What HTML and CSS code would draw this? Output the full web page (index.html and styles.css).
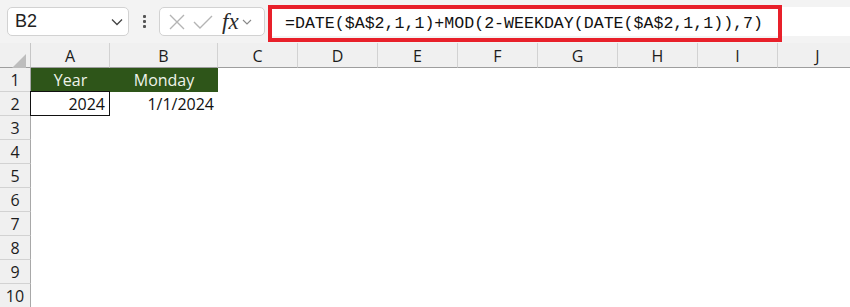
FILE: index.html
```html
<!DOCTYPE html>
<html lang="en">
<head>
    <meta charset="UTF-8">
    <title>Next Monday Formula</title>
    <link rel="stylesheet" href="styles.css">
</head>
<body>
    <div class="toolbar">
        <div class="name-box">
            <span>B2</span>
            <svg class="chevron" width="12" height="8" viewBox="0 0 12 8"><path d="M1 1.5 L6 6.5 L11 1.5" fill="none" stroke="#444" stroke-width="1.3"/></svg>
        </div>
        <div class="grip">
            <i></i><i></i><i></i>
        </div>
        <div class="fx-box">
            <svg width="18" height="18" viewBox="0 0 18 18"><path d="M2 2 L16 16 M16 2 L2 16" stroke="#b4b4b4" stroke-width="1.4"/></svg>
            <svg width="20" height="18" viewBox="0 0 20 18"><path d="M1 9 L7 15 L19 3" fill="none" stroke="#b4b4b4" stroke-width="1.4"/></svg>
            <span class="fx">fx</span>
            <svg width="10" height="6" viewBox="0 0 10 6"><path d="M1 1 L5 5 L9 1" fill="none" stroke="#888" stroke-width="1.1"/></svg>
        </div>
        <div class="formula-bar">
            <div class="formula">=DATE($A$2,1,1)+MOD(2-WEEKDAY(DATE($A$2,1,1)),7)</div>
        </div>
    </div>

    <div class="sheet">
        <div class="corner"><span class="tri"></span></div>
        <div class="col-head">A</div>
        <div class="col-head">B</div>
        <div class="col-head">C</div>
        <div class="col-head">D</div>
        <div class="col-head">E</div>
        <div class="col-head">F</div>
        <div class="col-head">G</div>
        <div class="col-head">H</div>
        <div class="col-head">I</div>
        <div class="col-head">J</div>

        <div class="row-head">1</div>
        <div class="cell title">Year</div>
        <div class="cell title">Monday</div>
        <div class="cell rest"></div>

        <div class="row-head">2</div>
        <div class="cell num boxed">2024</div>
        <div class="cell num">1/1/2024</div>
        <div class="cell rest"></div>

        <div class="row-head">3</div><div class="cell empty-row"></div>
        <div class="row-head">4</div><div class="cell empty-row"></div>
        <div class="row-head">5</div><div class="cell empty-row"></div>
        <div class="row-head">6</div><div class="cell empty-row"></div>
        <div class="row-head">7</div><div class="cell empty-row"></div>
        <div class="row-head">8</div><div class="cell empty-row"></div>
        <div class="row-head">9</div><div class="cell empty-row"></div>
        <div class="row-head">10</div><div class="cell empty-row"></div>
    </div>
</body>
</html>
```

FILE: styles.css
```css
body {
    margin: 0;
    width: 850px;
    height: 307px;
    overflow: hidden;
    background: #fff;
    font-family: 'Open Sans', 'Liberation Sans', sans-serif;
    color: #1f1f1f;
}

.toolbar {
    display: flex;
    align-items: center;
    height: 43px;
    background: #f3f3f3;
    padding-left: 7px;
    box-sizing: border-box;
}

.name-box {
    width: 122px;
    height: 29px;
    box-sizing: border-box;
    background: #fff;
    border: 1px solid #d2d2d2;
    border-radius: 5px;
    display: flex;
    align-items: center;
    justify-content: space-between;
    padding: 0 5px 0 7px;
    font-family: 'Liberation Sans', sans-serif;
    font-size: 18px;
    color: #222;
}

.name-box .chevron {
    margin-top: 1px;
}

.grip {
    width: 30px;
    display: flex;
    flex-direction: column;
    align-items: center;
    gap: 2px;
}

.grip i {
    width: 3px;
    height: 3px;
    background: #555;
    border-radius: 1px;
}

.fx-box {
    width: 106px;
    height: 29px;
    box-sizing: border-box;
    background: #fff;
    border: 1px solid #d2d2d2;
    border-radius: 5px;
    display: flex;
    align-items: center;
    gap: 7px;
    padding-left: 8px;
}

.fx {
    font-family: 'Liberation Serif', serif;
    font-style: italic;
    font-size: 23px;
    color: #2a2a2a;
    margin-left: 2px;
    margin-right: -4px;
    line-height: 1;
}

.formula-bar {
    flex: 1;
    height: 29px;
    background: #fff;
    margin-left: 3px;
    display: flex;
    align-items: center;
}

.formula {
    width: 514px;
    height: 37px;
    box-sizing: border-box;
    border: 4px solid #e8202a;
    display: flex;
    align-items: center;
    padding-left: 13px;
    font-family: 'Liberation Mono', monospace;
    font-size: 16.6px;
    color: #111;
    margin-top: 3px;
}

.sheet {
    display: grid;
    grid-template-columns: 31px 79px 108px repeat(8, 80px);
    grid-template-rows: 25px repeat(10, 24px);
}

.corner,
.col-head,
.row-head {
    background: #f0f0f0;
    box-sizing: border-box;
    display: flex;
    align-items: center;
    justify-content: center;
    font-size: 16px;
    color: #1c1c1c;
}

.corner {
    border-right: 1px solid #c6c6c6;
    border-bottom: 1px solid #9e9e9e;
    padding: 8px 4px 0 0;
    justify-content: flex-end;
}

.tri {
    width: 0;
    height: 0;
    border-left: 14px solid transparent;
    border-bottom: 14px solid #bdbdbd;
    margin-top: 4px;
}

.col-head {
    border-right: 1px solid #d2d2d2;
    border-bottom: 1px solid #9e9e9e;
    padding-top: 2px;
}

.row-head {
    border-right: 1px solid #a8a8a8;
    border-bottom: 1px solid #d2d2d2;
}

.cell {
    box-sizing: border-box;
    font-size: 16px;
    display: flex;
    align-items: center;
}

.rest {
    grid-column: span 8;
}

.empty-row {
    grid-column: span 10;
}

.title {
    background: #2e5519;
    color: #eef3ea;
    justify-content: center;
}

.num {
    justify-content: flex-end;
    padding-right: 4px;
    color: #111;
}

.boxed {
    border: 1px solid #111;
    margin-top: -1px;
    margin-left: -1px;
}
```
